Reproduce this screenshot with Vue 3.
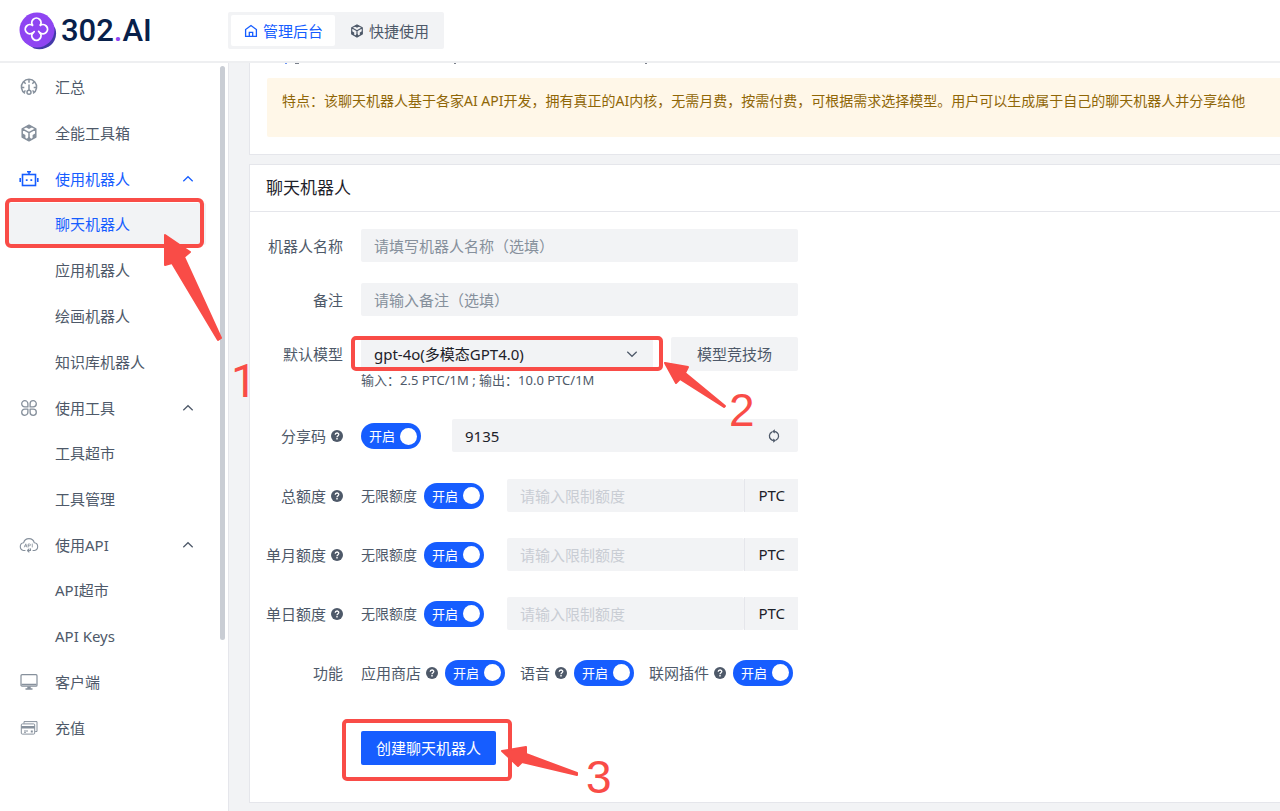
<script setup>
import { ref } from 'vue'

const menu = [
  { icon: 'gauge', label: '汇总' },
  { icon: 'cube', label: '全能工具箱' },
  {
    icon: 'robot',
    label: '使用机器人',
    active: true,
    children: [
      { label: '聊天机器人', active: true },
      { label: '应用机器人' },
      { label: '绘画机器人' },
      { label: '知识库机器人' },
    ],
  },
  { icon: 'grid', label: '使用工具', children: [{ label: '工具超市' }, { label: '工具管理' }] },
  { icon: 'cloud', label: '使用API', children: [{ label: 'API超市' }, { label: 'API Keys' }] },
  { icon: 'monitor', label: '客户端' },
  { icon: 'card', label: '充值' },
]

const name = ref('')
const remark = ref('')
const model = ref('gpt-4o')
const shareCode = ref('9135')
const shareOn = ref(true)

const quotas = ref([
  { id: 'total', label: '总额度', unlimited: true },
  { id: 'month', label: '单月额度', unlimited: true },
  { id: 'day', label: '单日额度', unlimited: true },
])

const features = ref([
  { id: 'store', label: '应用商店', on: true },
  { id: 'voice', label: '语音', on: true },
  { id: 'web', label: '联网插件', on: true },
])
</script>

<template>
  <div class="page">
    <svg class="defs" width="0" height="0" aria-hidden="true">
      <symbol id="i-gauge" viewBox="0 0 18 18">
        <g fill="none" stroke="currentColor" stroke-width="1.5">
          <path d="M5 15.400 A7.600 7.600 0 1 1 13 15.400" />
          <path d="M9 1.500v3.200M3.700 3.800l2 2M14.300 3.800l-2 2M1.500 9.500h2.800M13.700 9.500h2.800M3.800 14l1.700-1.500M14.200 14l-1.700-1.500" />
          <path d="M9 6.500v5.500" />
          <circle cx="9" cy="14.200" r="2" />
        </g>
      </symbol>
      <symbol id="i-cube" viewBox="0 0 18 18">
        <path d="M9 1.200 15.800 4.900V13L9 16.800 2.200 13V4.900Z M2.200 4.900 9 8.700 15.800 4.900 M9 8.700V16.800" fill="none" stroke="currentColor" stroke-width="1.500" stroke-linejoin="round" />
        <path d="M9 1 12.600 2.900 9 4.900 5.400 2.900ZM2 9 5.400 11V14.900L2 13ZM16 9 12.600 11V14.900L16 13ZM9 12.400 11.800 15.400 9 17 6.200 15.400Z" fill="currentColor" />
      </symbol>
      <symbol id="i-robot" viewBox="0 0 20 18">
        <rect x="3.500" y="4.500" width="13" height="11" fill="none" stroke="currentColor" stroke-width="1.600" />
        <path d="M8 1h4v1.500h-1.200v2H9.200v-2H8zM0.400 8h1.600v4H0.400zM18 8h1.600v4H18zM6.800 9.200h1.800v1.700H6.800zM11.400 9.200h1.800v1.700h-1.800z" fill="currentColor" />
      </symbol>
      <symbol id="i-grid" viewBox="0 0 18 18">
        <g fill="none" stroke="currentColor" stroke-width="1.300" stroke-linejoin="round">
          <path d="M7.900 7.900H4.800A3.100 3.100 0 1 1 7.900 4.800Z" />
          <path d="M10.100 7.900h3.100A3.100 3.100 0 1 0 10.100 4.800Z" />
          <path d="M7.900 10.100H4.800A3.100 3.100 0 1 0 7.900 13.200Z" />
          <path d="M10.100 10.100h3.100A3.100 3.100 0 1 1 10.100 13.200Z" />
        </g>
      </symbol>
      <symbol id="i-cloud" viewBox="0 0 20 18">
        <g fill="none" stroke="currentColor" stroke-width="1.100" stroke-linecap="round" stroke-linejoin="round">
          <path d="M6 14.500H4.500A3.900 3.900 0 0 1 4.600 6.800 5.500 5.500 0 0 1 15.300 6.800 3.900 3.900 0 0 1 15.500 14.500H14" />
          <path d="M8.500 14.500h3V12.800M10 13 8.500 14.500 10 16" />
          <path d="M5.400 11 6.800 7.800 7.800 11M5.800 10H7.500M9.200 11V8h1.500c1.200.1 1.200 1.600 0 1.700H9.300M13.300 8V11" stroke-width="0.800" />
        </g>
      </symbol>
      <symbol id="i-monitor" viewBox="0 0 18 18">
        <rect x="1" y="1.700" width="16" height="11.500" rx="1" fill="none" stroke="currentColor" stroke-width="1.200" />
        <path d="M1.500 11.500h15M5.500 16h7" fill="none" stroke="currentColor" stroke-width="1.300" />
        <path d="M7.300 13.500h3.400v2.500H7.300z" fill="currentColor" />
      </symbol>
      <symbol id="i-card" viewBox="0 0 18 18">
        <path d="M4 4.500V2.600H17V12.500H15.200" fill="none" stroke="currentColor" stroke-width="1" />
        <rect x="1.300" y="4.900" width="13.400" height="10.200" rx="1" fill="none" stroke="currentColor" stroke-width="1" />
        <path d="M1.300 7h13.400v2.400H1.300zM10.800 11.500h2v2h-2zM4 11.600h4v.9H4zM4 13.200h2v.9H4z" fill="currentColor" />
      </symbol>
      <symbol id="i-home" viewBox="0 0 14 14">
        <path d="M1.600 12.400V5.600L7 1.500l5.400 4.100v6.800ZM5.300 12.400V8.300h3.400v4.100" fill="none" stroke="currentColor" stroke-width="1.300" />
      </symbol>
      <symbol id="i-up" viewBox="0 0 12 12">
        <path d="M1.300 8.300 6 3.700 10.700 8.300" fill="none" stroke="currentColor" stroke-width="1.200" />
      </symbol>
      <symbol id="i-help" viewBox="0 0 12 12">
        <circle cx="6" cy="6" r="6" fill="currentColor" />
        <path d="M4.200 4.800C4.200 2.400 7.900 2.500 7.800 4.600 7.800 5.700 6 5.800 6 7.300" fill="none" stroke="#fff" stroke-width="1.300" />
        <path d="M5.300 8h1.400v1.400H5.300z" fill="#fff" />
      </symbol>
    </svg>

    <header class="topbar">
      <a class="brand" href="#" aria-label="302.AI">
        <svg width="38" height="38" viewBox="0 0 38 38" aria-hidden="true">
          <path d="M6 30 15 36.500C27 40 40 31 36.500 17L31 7Z" fill="#4339a8" />
          <circle cx="18" cy="18" r="17.500" fill="#8f45f2" />
          <path d="M14 13.800A4.600 4.600 0 1 1 20.800 13.800A4.600 4.600 0 1 1 20.800 20.600A4.600 4.600 0 1 1 14 20.600A4.600 4.600 0 1 1 14 13.800" fill="none" stroke="#fff" stroke-width="1.900" />
          <path d="M13.200 21.800 15.200 19.600M19.600 19.400 21 20.800" fill="none" stroke="#fff" stroke-width="1.700" stroke-linecap="round" />
        </svg>
        <span class="wordmark">302<span class="dot">.</span>AI</span>
      </a>
      <nav class="tabs">
        <button type="button" class="tab on">
          <svg width="14" height="14"><use href="#i-home" /></svg>管理后台
        </button>
        <button type="button" class="tab">
          <svg width="14" height="14"><use href="#i-cube" /></svg>快捷使用
        </button>
      </nav>
    </header>

    <div class="body">
      <aside class="sidebar">
        <ul class="menu">
          <li v-for="item in menu" :key="item.label">
            <a href="#" class="item" :class="{ active: item.active, parent: item.children }">
              <svg class="lead" width="20" height="18"><use :href="'#i-' + item.icon" /></svg>
              <span>{{ item.label }}</span>
              <svg v-if="item.children" class="fold" width="12" height="12"><use href="#i-up" /></svg>
            </a>
            <ul v-if="item.children" class="submenu">
              <li v-for="sub in item.children" :key="sub.label">
                <a href="#" class="item sub" :class="{ active: sub.active, chosen: sub.active }">{{ sub.label }}</a>
              </li>
            </ul>
          </li>
        </ul>
        <div class="thumb"></div>
      </aside>

      <main class="content">
        <section class="card intro">
          <svg class="descenders" width="400" height="1" viewBox="0 0 400 1" aria-hidden="true">
            <path d="M18 0h2v1h-2z" fill="#6d96f5" />
            <path d="M28 0h4v1h-4zM187 0h2v1h-2zM378 0h2v1h-2z" fill="#7b818c" />
          </svg>
          <p class="notice">特点：该聊天机器人基于各家AI API开发，拥有真正的AI内核，无需月费，按需付费，可根据需求选择模型。用户可以生成属于自己的聊天机器人并分享给他</p>
        </section>

        <section class="card">
          <h1 class="card-title">聊天机器人</h1>
          <form class="form" @submit.prevent>
            <div class="row">
              <label class="label" for="name">机器人名称</label>
              <input id="name" v-model="name" class="field" type="text" placeholder="请填写机器人名称（选填）" />
            </div>
            <div class="row">
              <label class="label" for="remark">备注</label>
              <input id="remark" v-model="remark" class="field" type="text" placeholder="请输入备注（选填）" />
            </div>
            <div class="row model-row">
              <label class="label" for="model">默认模型</label>
              <div class="stack">
                <div class="model">
                  <div class="select">
                    <select id="model" v-model="model" class="field">
                      <option value="gpt-4o">gpt-4o(多模态GPT4.0)</option>
                    </select>
                    <svg class="caret" width="12" height="12"><use href="#i-up" /></svg>
                  </div>
                  <button type="button" class="arena">模型竞技场</button>
                </div>
                <p class="hint">输入：2.5 PTC/1M ; 输出：10.0 PTC/1M</p>
              </div>
            </div>
            <div class="row wide share">
              <label class="label" for="share">分享码<svg class="help" width="12" height="12"><use href="#i-help" /></svg></label>
              <label class="switch share-switch">
                <input v-model="shareOn" type="checkbox" aria-label="分享码" />
                <span>开启</span>
              </label>
              <div class="code">
                <input id="share" v-model="shareCode" class="field" type="text" />
                <button type="button" class="refresh" aria-label="刷新">
                  <svg width="12" height="14" viewBox="0 0 12 14">
                    <path d="M4.200 2.800A4.500 4.500 0 0 0 3 10.400M7.800 11.200A4.500 4.500 0 0 0 9 3.600M6.200 2.400A4.500 4.500 0 0 1 9.400 4M5.800 11.600A4.500 4.500 0 0 1 2.600 10" fill="none" stroke="currentColor" stroke-width="1.300" />
                    <path d="M6.800.300V4.600L4 2.500ZM5.200 9.400V13.700L8 11.500Z" fill="currentColor" />
                  </svg>
                </button>
              </div>
            </div>
            <div v-for="q in quotas" :key="q.id" class="row wide">
              <label class="label" :for="q.id">{{ q.label }}<svg class="help" width="12" height="12"><use href="#i-help" /></svg></label>
              <label class="unlimited">
                <span class="small">无限额度</span>
                <span class="switch">
                  <input v-model="q.unlimited" type="checkbox" />
                  <span>开启</span>
                </span>
              </label>
              <div class="quota">
                <input :id="q.id" class="field" type="text" placeholder="请输入限制额度" :disabled="q.unlimited" />
                <span class="unit">PTC</span>
              </div>
            </div>
            <div class="row">
              <span class="label">功能</span>
              <div class="features">
                <label v-for="f in features" :key="f.id" class="feature">
                  {{ f.label }}
                  <svg class="help" width="12" height="12"><use href="#i-help" /></svg>
                  <span class="switch">
                    <input v-model="f.on" type="checkbox" />
                    <span>开启</span>
                  </span>
                </label>
              </div>
            </div>
            <div class="actions">
              <button type="submit" class="submit">创建聊天机器人</button>
            </div>
          </form>
        </section>
      </main>
    </div>

    <svg class="marks" width="800" height="811" viewBox="0 0 800 811">
      <g fill="none" stroke="#f94c47" stroke-width="4">
        <rect x="7" y="200" width="195" height="46" rx="4" />
        <rect x="353" y="338" width="308" height="31" rx="3" />
        <rect x="344" y="721" width="166" height="58" rx="3" />
      </g>
      <g fill="#f94c47" stroke="#f94c47" stroke-width="2" stroke-linejoin="round">
        <path d="M165 235 190 252 184 257 221 338 218 340 172 263 165 265Z" />
        <path d="M665 363 688 367 685 373 725 406 724 407 680 379 676 383Z" />
        <path d="M502 751 526 747 526 754 577 773 577 775 522 762 518 766Z" />
      </g>
      <text class="digit one" x="231" y="397">1</text>
      <text class="digit" x="729" y="426">2</text>
      <text class="digit" x="586" y="793">3</text>
    </svg>
  </div>
</template>

<style>
body {
  background: #f2f3f5;
}
</style>

<style scoped>
* {
  box-sizing: border-box;
}
.page {
  position: relative;
  min-height: 100vh;
  display: flex;
  flex-direction: column;
  overflow: hidden;
  font: 15px/22px "Noto Sans", "Noto Sans CJK SC", sans-serif;
  color: #4e5969;
}
.defs {
  position: absolute;
}
svg {
  flex: none;
}
ul, p, h1 {
  margin: 0;
  padding: 0;
  list-style: none;
}
a {
  color: inherit;
  text-decoration: none;
}
button, input, select {
  font: inherit;
  color: inherit;
  border: 0;
  margin: 0;
  padding: 0;
  background: none;
}
.topbar {
  display: flex;
  align-items: center;
  height: 63px;
  padding: 0 19px;
  background: #fff;
  border-bottom: 2px solid #eeeff1;
}
.brand {
  display: flex;
  align-items: center;
  gap: 4px;
  width: 209px;
}
.wordmark {
  font: 500 31px/38px Roboto, sans-serif;
  color: #08204a;
}
.dot {
  color: #8f45f2;
}
.tabs {
  display: flex;
  gap: 2px;
  padding: 3px;
  border-radius: 2px;
  background: #f2f3f5;
}
.tab {
  display: flex;
  align-items: center;
  gap: 5px;
  height: 31px;
  padding: 0 12px 0 13px;
  border-radius: 2px;
  line-height: 20px;
}
.tab.on {
  background: #fff;
  color: #165dff;
}
.body {
  flex: 1;
  display: flex;
}
.sidebar {
  position: relative;
  flex: none;
  width: 229px;
  padding: 3px 22px 20px 7px;
  background: #fff;
  border-right: 1px solid #e5e6eb;
}
.item {
  display: flex;
  align-items: center;
  height: 42px;
  margin-bottom: 4px;
  padding: 0 12px;
  border-radius: 2px;
}
.item.parent {
  margin-bottom: 3px;
}
.item.sub {
  padding-left: 48px;
}
.item.active {
  color: #165dff;
}
.item.chosen {
  background: #f2f3f5;
}
.lead {
  margin-right: 16px;
  color: #86909c;
}
.active .lead {
  color: #165dff;
}
.fold {
  margin-left: auto;
}
.thumb {
  position: absolute;
  top: 3px;
  right: 3px;
  width: 5px;
  height: 574px;
  border-radius: 3px;
  background: #c9cdd4;
}
.content {
  flex: 1;
  min-width: 0;
  padding: 0 0 8px 20px;
}
.card {
  background: #fff;
  border: 1px solid #e5e6eb;
  border-right: 0;
}
.intro {
  margin-bottom: 9px;
  padding: 0 0 17px 17px;
  border-top: 0;
}
.descenders {
  display: block;
  margin-bottom: 14px;
}
.notice {
  min-height: 59px;
  padding: 12px 15px;
  background: #fff7e8;
  border-radius: 2px 0 0 2px;
  font-size: 14px;
  color: #8f6606;
}
.card-title {
  height: 47px;
  padding-left: 16px;
  border-bottom: 1px solid #e5e6eb;
  font-size: 17px;
  font-weight: 400;
  line-height: 46px;
  color: #1d2129;
}
.form {
  max-width: 548px;
  padding: 17px 0 37px 16px;
}
.row {
  display: flex;
  margin-bottom: 21px;
}
.row.model-row {
  margin-bottom: 30px;
}
.row.wide {
  margin-bottom: 26px;
}
.row.share {
  margin-bottom: 27px;
}
.label {
  flex: none;
  display: flex;
  align-items: center;
  justify-content: flex-end;
  width: 77px;
  height: 33px;
  margin-right: 18px;
  white-space: nowrap;
}
.label .help {
  margin-left: 5px;
}
.help {
  color: #4e5969;
}
.field {
  flex: 1;
  min-width: 0;
  width: 100%;
  height: 33px;
  padding: 0 13px;
  border-radius: 2px;
  background: #f2f3f5;
  color: #1d2129;
}
.field::placeholder {
  color: #86909c;
  opacity: 1;
}
.field:disabled::placeholder {
  color: #c9cdd4;
}
.stack {
  flex: 1;
}
.model {
  display: flex;
  gap: 18px;
}
.select {
  position: relative;
  flex: 1;
}
select.field {
  display: block;
  height: 34px;
  appearance: none;
}
.caret {
  position: absolute;
  right: 15px;
  top: 11px;
  transform: rotate(180deg);
}
.arena {
  width: 127px;
  height: 34px;
  border-radius: 2px;
  background: #f2f3f5;
}
.hint {
  font-size: 13px;
  line-height: 18px;
}
.switch {
  position: relative;
  flex: none;
  display: flex;
  align-items: center;
  width: 60px;
  height: 26px;
  padding-left: 8px;
  border-radius: 13px;
  background: #165dff;
  color: #fff;
  font-size: 13px;
}
.switch input {
  position: absolute;
  inset: 0;
  appearance: none;
  cursor: pointer;
}
.switch::after {
  content: "";
  width: 17px;
  height: 17px;
  margin-left: 5px;
  border-radius: 50%;
  background: #fff;
}
.share-switch {
  margin: 4px 31px 0 0;
}
.code {
  position: relative;
  flex: 1;
}
.refresh {
  position: absolute;
  top: 0;
  right: 18px;
  height: 33px;
  display: flex;
  align-items: center;
}
.unlimited {
  display: flex;
  align-items: center;
  gap: 7px;
  height: 33px;
  margin-right: 23px;
}
.small {
  font-size: 14px;
}
.quota {
  flex: 1;
  min-width: 0;
  display: flex;
}
.unit {
  height: 33px;
  padding: 0 13px;
  border-left: 1px solid #e5e6eb;
  background: #f2f3f5;
  line-height: 32px;
  color: #1d2129;
}
.features {
  display: flex;
  align-items: center;
  gap: 15px;
  white-space: nowrap;
}
.feature {
  display: flex;
  align-items: center;
}
.feature .help {
  margin: 0 7px 0 5px;
}
.actions {
  padding: 21px 0 0 95px;
}
.submit {
  display: block;
  height: 34px;
  padding: 0 15px;
  border-radius: 2px;
  background: #165dff;
  color: #fff;
}
.marks {
  position: absolute;
  top: 0;
  left: 0;
  pointer-events: none;
}
.digit {
  font: 46px "Liberation Sans", sans-serif;
  fill: #f94c47;
}
.digit.one {
  font-family: Roboto, sans-serif;
}
</style>
